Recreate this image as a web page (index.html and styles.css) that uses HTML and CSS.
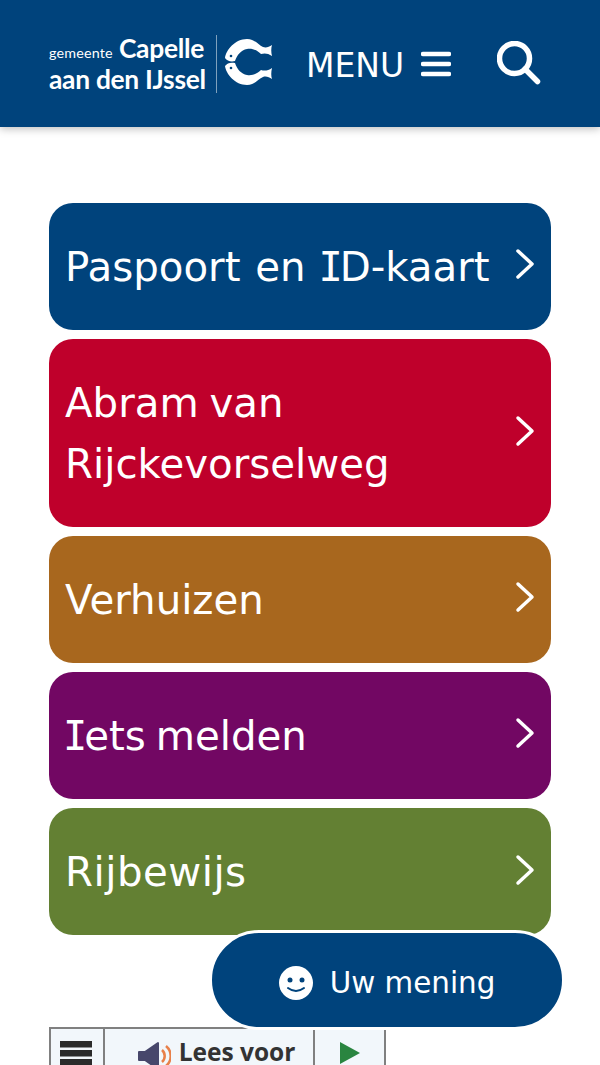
FILE: index.html
```html
<!DOCTYPE html>
<html lang="nl">
<head>
    <title>Gemeente Capelle aan den IJssel</title>
    <link rel="stylesheet" href="styles.css">
</head>
<body>

<header class="site-header">
    <a class="logo" href="#">
        <span class="logo-text">
            <span class="logo-line"><small>gemeente</small> Capelle</span>
            <span class="logo-line">aan den IJssel</span>
        </span>
        <svg class="logo-mark" viewBox="0 0 48 48" width="48" height="48">
            <g id="fish">
                <path fill="#fff" d="M0 20 C1 12 10 1 22 1 C30 1 33 7 38 9 C41 10 44 9 47 7 C46 10 46 14 47 18 C43 15 39 15 36 16 C33 13 28 10 22 11 C16 12 12 17 10 23 C6 24 2 23 0 20 Z"/>
                <circle cx="6" cy="18" r="1.300" fill="#00437c"/>
            </g>
            <use href="#fish" transform="matrix(1 0 0 -1 0 48)"/>
        </svg>
    </a>
    <a class="menu-toggle" href="#">
        <span class="menu-label">MENU</span>
        <svg class="menu-icon" viewBox="0 0 30 26" width="30" height="26">
            <path d="M2 3h26M2 13h26M2 23h26" stroke="#fff" stroke-width="4.500" stroke-linecap="round"/>
        </svg>
    </a>
    <a class="search-toggle" href="#">
        <svg viewBox="0 0 46 46" width="46" height="46">
            <circle cx="17.500" cy="17.500" r="15" fill="none" stroke="#fff" stroke-width="5.500"/>
            <path d="M28 28 L40.500 40.500" stroke="#fff" stroke-width="5.500" stroke-linecap="round"/>
        </svg>
    </a>
</header>

<main class="tasks">
    <a class="task task-blue" href="#"><span>Paspoort en <span class="cap-i">I</span>D-kaart</span><svg class="chevron" viewBox="0 0 20 32"><path d="M3 3 L17 16 L3 29"/></svg></a>
    <a class="task task-red" href="#"><span>Abram van Rijckevorselweg</span><svg class="chevron" viewBox="0 0 20 32"><path d="M3 3 L17 16 L3 29"/></svg></a>
    <a class="task task-brown" href="#"><span>Verhuizen</span><svg class="chevron" viewBox="0 0 20 32"><path d="M3 3 L17 16 L3 29"/></svg></a>
    <a class="task task-purple" href="#"><span><span class="cap-i">I</span>ets melden</span><svg class="chevron" viewBox="0 0 20 32"><path d="M3 3 L17 16 L3 29"/></svg></a>
    <a class="task task-green" href="#"><span>Rijbewijs</span><svg class="chevron" viewBox="0 0 20 32"><path d="M3 3 L17 16 L3 29"/></svg></a>
</main>

<div class="readspeaker">
    <div class="rs-cell rs-menu">
        <svg viewBox="0 0 32 32" width="32" height="32"><path d="M0 0h32v6.500H0zM0 9h32v6.500H0zM0 18h32v6.500H0z" fill="#2b2b2b"/></svg>
    </div>
    <div class="rs-cell rs-listen">
        <svg viewBox="0 0 34 30" width="34" height="30">
            <path d="M2 11 h6 L21 2 V28 L8 19 H2 Z" fill="#47476b" stroke="#47476b" stroke-linejoin="round" stroke-width="2"/>
            <path d="M25 9 a8 8 0 0 1 0 12" fill="none" stroke="#e8804a" stroke-width="2.500"/>
            <path d="M29 5 a13 13 0 0 1 0 20" fill="none" stroke="#e8804a" stroke-width="2.500"/>
        </svg>
        <span>Lees voor</span>
    </div>
    <div class="rs-cell rs-play">
        <svg viewBox="0 0 22 24" width="22" height="24"><path d="M1 1 L21 12 L1 23 Z" fill="#2a8540"/></svg>
    </div>
</div>

<a class="feedback" href="#">
    <svg viewBox="0 0 34 34" width="34" height="34">
        <circle cx="17" cy="17" r="17" fill="#fff"/>
        <circle cx="11" cy="14" r="2.500" fill="#00437c"/>
        <circle cx="23" cy="14" r="2.500" fill="#00437c"/>
        <path d="M9 22 Q17 28 25 22" fill="none" stroke="#00437c" stroke-width="2" stroke-linecap="round"/>
    </svg>
    <span>Uw mening</span>
</a>

</body>
</html>
```

FILE: styles.css
```css
html, body {
    height: 1065px;
    overflow: hidden;
}
body {
    margin: 0;
    font-family: "DejaVu Sans", Verdana, sans-serif;
    background-color: #fff;
    position: relative;
}
a {
    color: #fff;
    text-decoration: none;
}
.site-header {
    height: 127px;
    box-sizing: border-box;
    background-color: #00437c;
    box-shadow: 0 2px 8px rgba(0,0,0,0.25);
    display: flex;
    align-items: center;
    padding: 0 57px 0 49px;
}
.logo {
    display: flex;
    align-items: center;
    width: 257px;
}
.logo-text {
    display: flex;
    flex-direction: column;
    font-family: Lato, sans-serif;
    font-weight: 700;
    font-size: 26.400px;
    line-height: 27px;
    letter-spacing: -0.3px;
    padding-right: 10px;
    border-right: 1px solid #7fa1bd;
    white-space: nowrap;
}
.logo-line small {
    font-size: 14.300px;
    font-weight: 400;
    letter-spacing: 0.2px;
}
.logo-mark {
    margin-left: 8px;
    margin-top: -4px;
}
.menu-toggle {
    display: flex;
    align-items: center;
    gap: 17px;
    font-size: 33px;
}
.menu-label {
    padding-top: 3px;
}
.search-toggle {
    display: flex;
    margin-left: auto;
}
.tasks {
    display: flex;
    flex-direction: column;
    gap: 9.300px;
    padding: 76px 49px 0;
}
.task {
    display: flex;
    align-items: center;
    justify-content: space-between;
    padding: 35px 16px 31px;
    border-radius: 24px;
    font-size: 40.300px;
    line-height: 60.800px;
}
.cap-i {
    font-family: "DejaVu Sans Mono", monospace;
    letter-spacing: -3px;
    margin-left: -2px;
}
.task-blue { background-color: #00437c; word-spacing: 2px; }
.task-red { background-color: #bf002b; word-spacing: -2px; }
.task-brown { background-color: #a8671e; }
.task-purple { background-color: #720763; word-spacing: -3px; }
.task-green { background-color: #638033; letter-spacing: 0.5px; }
.chevron {
    flex: none;
    width: 20px;
    height: 32px;
    margin-top: -8px;
    fill: none;
    stroke: #fff;
    stroke-width: 3.500;
    stroke-linecap: round;
    stroke-linejoin: round;
}
.readspeaker {
    display: flex;
    width: 337px;
    height: 60px;
    margin: 92px 0 0 49px;
    box-sizing: border-box;
    border: 2px solid #808080;
    background-color: #f2f7fb;
}
.rs-cell {
    display: flex;
    align-items: flex-start;
    justify-content: center;
    padding-top: 12px;
    border-right: 2px solid #808080;
    box-sizing: border-box;
}
.rs-menu {
    width: 54px;
    padding-right: 2px;
}
.rs-listen {
    width: 210px;
    gap: 8px;
    padding-left: 14px;
    font-family: "Open Sans", sans-serif;
    font-weight: 700;
    font-size: 24.500px;
    line-height: 22px;
    color: #333;
}
.rs-play {
    flex: 1;
    border-right: 0;
}
.feedback {
    position: absolute;
    left: 209px;
    top: 930px;
    width: 356px;
    height: 100px;
    box-sizing: border-box;
    display: flex;
    align-items: center;
    justify-content: center;
    gap: 17px;
    padding-top: 5px;
    background-color: #00437c;
    border: 3px solid #fff;
    border-radius: 50px;
    font-size: 29.400px;
}
```
